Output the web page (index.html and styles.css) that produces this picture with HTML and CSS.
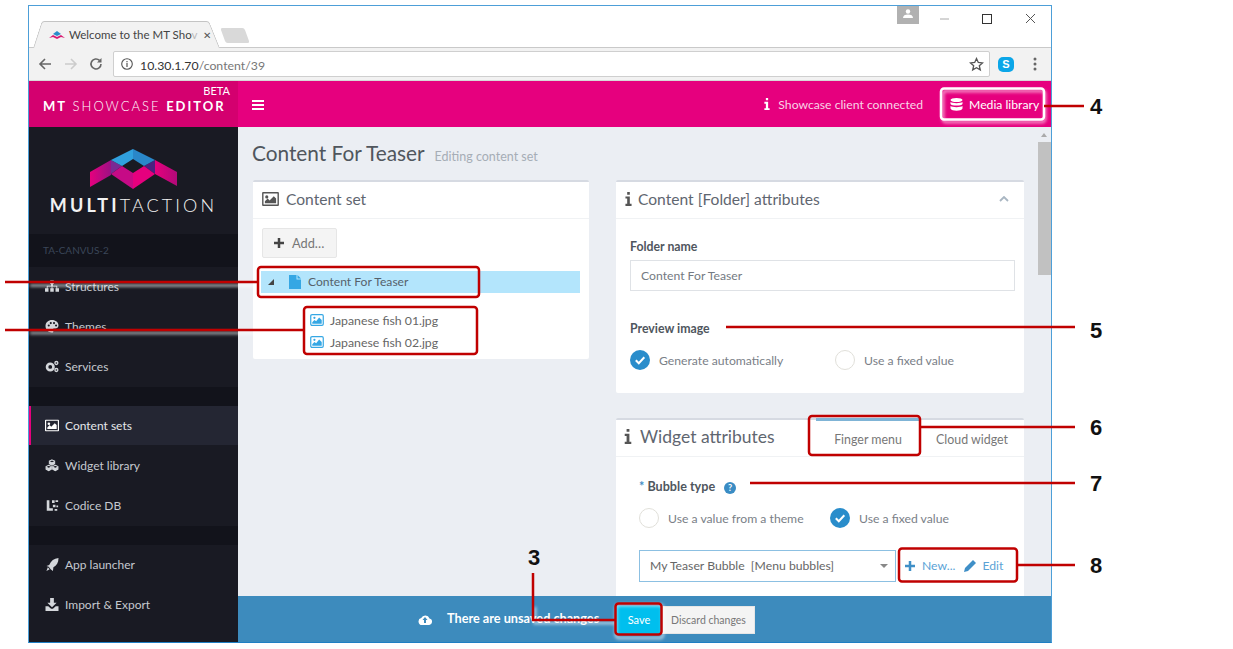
FILE: index.html
```html
<!DOCTYPE html>
<html lang="en">
<head>
<meta charset="utf-8">
<title>MT Showcase Editor</title>
<link rel="stylesheet" href="styles.css">
</head>
<body>
<svg width="0" height="0" class="defs">
  <symbol id="i-image" viewBox="0 0 18 15"><path fill="currentColor" fill-rule="evenodd" d="M1 0h16a1 1 0 0 1 1 1v13a1 1 0 0 1-1 1H1a1 1 0 0 1-1-1V1a1 1 0 0 1 1-1zm.5 1.500v12h15v-12zM3 12V10l3-3 2 2 4.500-4.500L15 7v5zM5 7a1.700 1.700 0 1 1 0-3.400A1.700 1.700 0 0 1 5 7z"/></symbol>
  <symbol id="i-info" viewBox="0 0 8 16"><path fill="currentColor" d="M2.500 0h3v3h-3zM.5 5h5v8.500h2V16H.5v-2.500h2V7.500h-2z"/></symbol>
  <symbol id="i-plus" viewBox="0 0 12 12"><path fill="currentColor" d="M4.500 0h3v4.500H12v3H7.500V12h-3V7.500H0v-3h4.500z"/></symbol>
  <symbol id="i-photo" viewBox="0 0 16 14"><rect x=".7" y=".7" width="14.600" height="12.600" rx="1.500" fill="#fff" stroke="#35a7e4" stroke-width="1.400"/><path fill="#35a7e4" d="M2.500 11.500V9.500L5 7l2 1.500L10.500 4 13.500 7v4.500z"/><circle cx="5" cy="4.500" r="1.300" fill="#35a7e4"/></symbol>
  <symbol id="i-check" viewBox="0 0 20 20"><circle cx="10" cy="10" r="10" fill="#2a8dcb"/><path d="M5.800 10.300l3 3 5.500-6" fill="none" stroke="#fff" stroke-width="2"/></symbol>
</svg>

<div class="window">
  <div class="tabstrip">
    <div class="tab">
      <svg class="favicon" width="16" height="8" viewBox="0 0 16 8"><path fill="#d81b72" d="M0 7l4-3 4 2 4-2 4 3-4-1-4 2-4-2z"/><path fill="#2a8dcb" d="M4 3l4-3 4 3-4 2z"/></svg>
      <span class="tab-title">Welcome to the MT Sho<span class="tab-fade">v</span></span>
      <span class="tab-close">✕</span>
    </div>
    <div class="newtab"></div>
    <div class="winctl">
      <div class="profile"><svg width="10" height="9" viewBox="0 0 10 9"><circle cx="5" cy="2.500" r="2.200" fill="#fff"/><path d="M0 9c0-2.500 2-3.500 5-3.500S10 6.500 10 9z" fill="#fff"/></svg></div>
      <svg class="ctl" width="96" height="20" viewBox="0 0 96 20"><path d="M0 10h9" stroke="#aaa" stroke-width="1"/><rect x="42.500" y="5.500" width="9" height="9" fill="none" stroke="#333"/><path d="M86 5l9 9M95 5l-9 9" stroke="#555" fill="none"/></svg>
    </div>
  </div>
  <div class="toolbar">
    <svg class="nav" width="16" height="14" viewBox="0 0 16 14"><path d="M14 7H3M8 2L3 7l5 5" fill="none" stroke="#666" stroke-width="1.600"/></svg>
    <svg class="nav" width="16" height="14" viewBox="0 0 16 14"><path d="M2 7h11M8 2l5 5-5 5" fill="none" stroke="#ccc" stroke-width="1.600"/></svg>
    <svg class="nav" width="14" height="14" viewBox="0 0 14 14"><path d="M12 7a5 5 0 1 1-1.500-3.600" fill="none" stroke="#666" stroke-width="1.600"/><path d="M12.500 1v4.500H8z" fill="#666"/></svg>
    <div class="omnibox">
      <svg width="12" height="12" viewBox="0 0 12 12"><circle cx="6" cy="6" r="5.300" fill="none" stroke="#555" stroke-width="1.100"/><path d="M6 5v4M6 3v1.200" stroke="#555" stroke-width="1.200"/></svg>
      <span class="url">10.30.1.70<span class="url-path">/content/39</span></span>
      <svg class="star" width="15" height="15" viewBox="0 0 15 15"><path d="M7.500 1.500l1.800 4 4.200.4-3.200 2.800 1 4.200-3.800-2.200-3.800 2.200 1-4.200L1.500 5.900l4.200-.4z" fill="none" stroke="#555" stroke-width="1.300"/></svg>
    </div>
    <div class="skype">S</div>
    <svg class="dots" width="4" height="14" viewBox="0 0 4 14"><circle cx="2" cy="2" r="1.500" fill="#666"/><circle cx="2" cy="7" r="1.500" fill="#666"/><circle cx="2" cy="12" r="1.500" fill="#666"/></svg>
  </div>

  <div class="app">
    <aside class="sidebar">
      <div class="brandbar">
        <span class="beta">BETA</span>
        <span class="brand"><b>MT</b> SHOWCASE <b>EDITOR</b></span>
      </div>
      <div class="logo">
        <svg width="90" height="42" viewBox="0 0 90 42">
          <defs>
            <linearGradient id="gl" x1="0" x2="1"><stop offset="0" stop-color="#e6007e"/><stop offset="1" stop-color="#9b1184"/></linearGradient>
            <linearGradient id="gr" x1="0" x2="1"><stop offset="0" stop-color="#e6007e"/><stop offset="1" stop-color="#b00a78"/></linearGradient>
          </defs>
          <path fill="url(#gl)" d="M1 25L22 13v15L1 40z"/>
          <path fill="url(#gr)" d="M66 13l22 12v14L66 27z"/>
          <path fill="#7a2a94" d="M22 13l11 6-11 8z"/>
          <path fill="#4b2180" d="M66 13l-11 6 11 8z"/>
          <path fill="#30a0de" d="M44 2v10L33 19 22 13z"/>
          <path fill="#2a87c9" d="M44 2v10l11 7 11-6z"/>
          <path fill="#c60a86" d="M33 19l11 7v16L22 27z"/>
          <path fill="#e6007e" d="M55 19l-11 7v16l22-15z"/>
        </svg>
        <span class="logotext"><b>MULTI</b>TACTION</span>
      </div>
      <div class="sb-band sb-device">TA-CANVUS-2</div>
      <nav class="sb-group">
        <a class="sb-item"><svg class="sb-ico" viewBox="0 0 16 14"><path fill="currentColor" d="M6 0h4v4H9v2h5v3h2v4h-4V9h1V7H8.500v2H10v4H6V9h1.500V7H3v2h1v4H0V9h2V6h5V4H6z"/></svg>Structures</a>
        <a class="sb-item"><svg class="sb-ico" viewBox="0 0 16 16"><path fill="currentColor" fill-rule="evenodd" d="M8 0c4.500 0 8 2.800 8 6.500 0 3-2.500 4.500-5 4-1.500-.2-2 .7-1.500 2 .6 1.500-.2 3-1.500 3C3.500 15.500 0 12 0 7.500 0 3 3.500 0 8 0zM4 5.500a1.300 1.300 0 1 0 0 2.600 1.300 1.300 0 0 0 0-2.600zM6.500 2.500a1.300 1.300 0 1 0 0 2.600 1.300 1.300 0 0 0 0-2.600zM10.500 2.500a1.300 1.300 0 1 0 0 2.600 1.300 1.300 0 0 0 0-2.600zM13 5.500a1.300 1.300 0 1 0 0 2.600 1.300 1.300 0 0 0 0-2.600z"/></svg>Themes</a>
        <a class="sb-item"><svg class="sb-ico" viewBox="0 0 16 14"><circle cx="6" cy="7.500" r="3.700" fill="none" stroke="currentColor" stroke-width="3"/><circle cx="13" cy="3" r="1.700" fill="none" stroke="currentColor" stroke-width="1.500"/><circle cx="13" cy="11" r="1.700" fill="none" stroke="currentColor" stroke-width="1.500"/></svg>Services</a>
      </nav>
      <div class="sb-band sb-gap"></div>
      <nav class="sb-group">
        <a class="sb-item sb-active"><svg class="sb-ico"><use href="#i-image"/></svg>Content sets</a>
        <a class="sb-item"><svg class="sb-ico" viewBox="0 0 17 15"><path fill="none" stroke="currentColor" stroke-width="1.300" d="M8.500 .7l3.200 1.400v3.300L8.500 7 5.300 5.400V2.100zM4.500 7.300l3.200 1.400v3.400l-3.200 1.700-3.200-1.700V8.700zM12.500 7.300l3.200 1.400v3.400l-3.200 1.700-3.200-1.700V8.700z"/><path fill="currentColor" d="M5.300 2.100l3.200 1.500 3.200-1.500v3.300L8.500 7 5.300 5.400zM1.300 8.700l3.200 1.500 3.200-1.500v3.400l-3.200 1.700-3.200-1.700zM9.300 8.700l3.200 1.500 3.200-1.500v3.400l-3.200 1.700-3.200-1.700z"/></svg>Widget library</a>
        <a class="sb-item"><svg class="sb-ico" viewBox="0 0 16 14"><path fill="currentColor" d="M2 1h3v9h4v3H2zM8 1h3v3H8zM12 1h3v2h-3zM9 6h3v3H9zM13 7h2v2h-2zM11 11h3v2h-3z"/></svg>Codice DB</a>
      </nav>
      <div class="sb-band sb-gap"></div>
      <nav class="sb-group">
        <a class="sb-item"><svg class="sb-ico" viewBox="0 0 14 14"><path fill="currentColor" d="M14 0c0 5-2 8-5.500 10l-.5 4-2.500-2L3.500 9.500 1 8.500l3-1C6 3 9 .5 14 0zM2.500 10l2 2L1 14z"/></svg>App launcher</a>
        <a class="sb-item"><svg class="sb-ico" viewBox="0 0 14 14"><path fill="currentColor" d="M5 0h4v5h3L7 10 2 5h3zM0 9h3l3 2.500h2L11 9h3v5H0z"/></svg>Import &amp; Export</a>
      </nav>
    </aside>

    <div class="workspace">
      <header class="appbar">
        <svg class="burger" width="12" height="10" viewBox="0 0 12 10"><path fill="#fff" d="M0 0h12v2H0zM0 4h12v2H0zM0 8h12v2H0z"/></svg>
        <span class="status"><svg width="6" height="12"><use href="#i-info"/></svg>Showcase client connected</span>
        <span class="medialib">
          <svg width="13" height="13" viewBox="0 0 13 13"><ellipse cx="6.500" cy="2" rx="6" ry="2" fill="#fff"/><path fill="#fff" d="M.5 4c1.500 1.500 10.500 1.500 12 0v2c-1 2-11 2-12 0zM.5 8c1.500 1.500 10.500 1.500 12 0v2.500c-1 3-11 3-12 0z"/></svg>
          Media library
        </span>
      </header>

      <div class="body">
        <main class="content">
          <h1 class="title">Content For Teaser <small>Editing content set</small></h1>
          <div class="columns">
            <section class="panel panel-tree">
              <div class="panel-head"><svg class="head-ico"><use href="#i-image"/></svg>Content set</div>
              <div class="panel-tree-body">
                <button class="btn-add"><svg width="10" height="10"><use href="#i-plus"/></svg>Add…</button>
                <div class="tree-root">
                  <span class="caret"></span>
                  <svg width="12" height="14" viewBox="0 0 12 14"><path fill="#35a7e4" d="M0 0h7.500v4.500H12V14H0zM8.500 0L12 3.500H8.500z"/></svg>
                  Content For Teaser
                </div>
                <div class="tree-file"><svg width="14" height="12"><use href="#i-photo"/></svg>Japanese fish 01.jpg</div>
                <div class="tree-file"><svg width="14" height="12"><use href="#i-photo"/></svg>Japanese fish 02.jpg</div>
              </div>
            </section>

            <div class="stack">
              <section class="panel panel-folder">
                <div class="panel-head">
                  <svg class="info-ico"><use href="#i-info"/></svg>Content [Folder] attributes
                  <svg class="chev" width="10" height="6" viewBox="0 0 10 6"><path d="M1 5l4-4 4 4" fill="none" stroke="#a9b6c2" stroke-width="1.800"/></svg>
                </div>
                <div class="form">
                  <label class="field-label">Folder name</label>
                  <div class="input">Content For Teaser</div>
                  <label class="field-label preview-label">Preview image</label>
                  <div class="radios radios-preview">
                    <span class="radio radio-auto"><svg width="20" height="20"><use href="#i-check"/></svg>Generate automatically</span>
                    <span class="radio"><i class="ring"></i>Use a fixed value</span>
                  </div>
                </div>
              </section>

              <section class="panel panel-widget">
                <div class="panel-head widget-head">
                  <svg class="info-big"><use href="#i-info"/></svg>
                  <span class="widget-title">Widget attributes</span>
                  <div class="tabs">
                    <span class="wtab wtab-on">Finger menu</span>
                    <span class="wtab">Cloud widget</span>
                  </div>
                </div>
                <div class="form form-widget">
                  <label class="field-label bubble-label"><span class="req">*</span> Bubble type <span class="help">?</span></label>
                  <div class="radios radios-bubble">
                    <span class="radio radio-theme"><i class="ring"></i>Use a value from a theme</span>
                    <span class="radio"><svg width="20" height="20"><use href="#i-check"/></svg>Use a fixed value</span>
                  </div>
                  <div class="select-row">
                    <div class="select">My Teaser Bubble&nbsp; [Menu bubbles]<span class="select-caret"></span></div>
                    <span class="link"><svg width="10" height="10"><use href="#i-plus"/></svg>New...</span>
                    <span class="link link-edit"><svg width="12" height="12" viewBox="0 0 12 12"><path d="M9 0l3 3-8 8-4 1 1-4z" fill="currentColor"/></svg>Edit</span>
                  </div>
                </div>
              </section>
            </div>
          </div>
        </main>
        <div class="scrollbar">
          <span class="sc-up"></span>
          <span class="sc-thumb"></span>
        </div>
      </div>

      <footer class="savebar">
        <svg width="14" height="11" viewBox="0 0 14 11"><path fill="#fff" fill-rule="evenodd" d="M4 11a3.500 3.500 0 0 1-.8-6.900A4.500 4.500 0 0 1 11.500 4.500 3.300 3.300 0 0 1 10.500 11zM7 3L4.500 6H6v3h2V6h1.500z"/></svg>
        <span class="unsaved">There are unsaved changes</span>
        <button class="btn-save">Save</button>
        <button class="btn-discard">Discard changes</button>
      </footer>
    </div>
  </div>
</div>

<!-- callouts drawn over the screenshot -->
<svg class="callouts" width="1233" height="649" viewBox="0 0 1233 649">
  <defs><filter id="soft" x="-20%" y="-200%" width="140%" height="500%"><feGaussianBlur stdDeviation="1.500"/></filter></defs>
  <g fill="none" stroke="#fff" stroke-opacity=".55" stroke-width="3" filter="url(#soft)">
    <path d="M30 285.500H259M30 333H305"/>
    <rect x="943" y="91" width="102" height="31" rx="3"/>
    <path d="M535 607v16h80"/>
    <rect x="616" y="605" width="47" height="33" rx="3"/>
  </g>
  <rect x="941" y="88.500" width="103" height="31" rx="3" fill="none" stroke="#fff" stroke-width="2.500"/>
  <g fill="none" stroke="#c00000" stroke-width="2.500">
    <path d="M1044 106h40M5 282h252M5 330h298M726 327h349M921 427h154M750 483h325M1017 565h58M533 573v47h82"/>
    <rect x="258" y="267" width="221" height="30" rx="3"/>
    <rect x="304" y="307" width="173" height="47" rx="3"/>
    <rect x="809" y="416" width="111" height="39" rx="3"/>
    <rect x="899" y="548.500" width="118" height="33" rx="3"/>
    <rect x="615.500" y="603.500" width="46" height="31" rx="3"/>
  </g>
</svg>
<span class="num num-4">4</span>
<span class="num num-5">5</span>
<span class="num num-6">6</span>
<span class="num num-7">7</span>
<span class="num num-8">8</span>
<span class="num num-3">3</span>
</body>
</html>
```
FILE: styles.css
```css
* { box-sizing: border-box; }
html, body { margin: 0; height: 649px; overflow: hidden; background: #fff; }
body { font-family: "Lato", "Open Sans", sans-serif; color: #5f6670; padding: 5px 0 0 28px; }
.defs { position: absolute; }

.window { width: 1024px; height: 638px; border: 1px solid #4d9fd8; border-bottom-color: #1f7fc4; display: flex; flex-direction: column; background: #fff; }

/* browser chrome */
.tabstrip { height: 42px; display: flex; align-items: flex-end; padding-left: 4px; border-bottom: 1px solid #c9c9c9; flex: none; }
.tab { position: relative; isolation: isolate; width: 187px; height: 27px; margin-bottom: -1px; display: flex; align-items: center; padding-left: 16px; font: 11.500px "Lato", sans-serif; color: #444; white-space: nowrap; }
.tab::before, .tab::after { content: ""; position: absolute; top: 0; bottom: 0; width: 60%; background: #f2f2f2; border-top: 1px solid #c4c4c4; z-index: -1; }
.tab::before { left: 0; border-left: 1px solid #c4c4c4; border-radius: 3px 0 0 0; transform-origin: bottom left; transform: skewX(-18deg); }
.tab::after { right: 0; border-right: 1px solid #c4c4c4; border-radius: 0 3px 0 0; transform-origin: bottom right; transform: skewX(22deg); }
.tab-title { margin-left: 4px; }
.tab-fade { color: #bbb; }
.tab-close { margin-left: 6px; font-size: 10px; color: #555; }
.newtab { width: 24px; height: 15px; margin: 0 0 4px 3px; background: #d9d9d9; border-radius: 2px; transform: skewX(20deg); }
.winctl { margin-left: auto; align-self: flex-start; display: flex; align-items: flex-start; }
.profile { width: 22px; height: 18px; background: #b1b1b1; display: flex; justify-content: center; padding-top: 3px; margin-right: 21px; }
.ctl { margin-top: 3px; margin-right: 15px; }

.toolbar { height: 33px; flex: none; background: #f2f2f2; display: flex; align-items: center; padding-left: 8px; border-bottom: 1px solid #d8d8d8; }
.nav { margin-right: 10px; flex: none; }
.omnibox { width: 877px; height: 26px; background: #fff; border: 1px solid #cfcfcf; border-radius: 2px; display: flex; align-items: center; padding: 0 5px 0 7px; font-size: 12.300px; color: #333; }
.url { margin-left: 7px; padding-top: 2px; }
.url-path { color: #777; }
.star { margin-left: auto; }
.skype { width: 16px; height: 15px; margin-left: 8px; border-radius: 5px; background: #0ca6e8; color: #fff; font: bold 11px/15px "Liberation Sans", sans-serif; text-align: center; }
.dots { margin-left: 19px; }

/* app shell */
.app { flex: 1; display: flex; min-height: 0; }
.sidebar { width: 209px; flex: none; background: #191a23; display: flex; flex-direction: column; }
.brandbar { height: 46px; background: #d4006f; position: relative; display: flex; align-items: flex-end; padding: 0 0 13px 14px; color: #fff; }
.beta { position: absolute; right: 8px; top: 3px; font-size: 11px; }
.brand { font-size: 13px; font-weight: 300; letter-spacing: 2px; white-space: nowrap; }
.brand b { font-weight: 700; }
.logo { height: 107px; display: flex; flex-direction: column; align-items: center; padding-top: 20px; }
.logotext { margin-top: 5px; color: #f2f2f2; font-size: 18px; font-weight: 300; letter-spacing: 3.100px; white-space: nowrap; }
.logotext b { font-weight: 700; }
.sb-band { background: #12131b; flex: none; }
.sb-device { height: 33px; padding: 10px 0 0 14px; font-size: 10px; color: #3a4658; }
.sb-gap { height: 19px; }
.sb-group { display: flex; flex-direction: column; flex: none; }
.sb-item { height: 40px; display: flex; align-items: center; gap: 6px; padding: 0 0 1px 16px; font-size: 12px; color: #c5c9cf; }
.sb-ico { width: 14px; height: 13px; flex: none; color: #d4d7db; }
.sb-active { height: 39px; margin-bottom: 1px; background: #242633; color: #e4e6ea; border-left: 2px solid #e6007e; padding: 0 0 0 14px; }
.sb-active .sb-ico { color: #fff; }

.workspace { flex: 1; min-width: 0; display: flex; flex-direction: column; }
.appbar { height: 46px; flex: none; background: #e6007e; display: flex; align-items: center; padding-left: 14px; color: #fff; font-size: 12.200px; }
.burger { margin-top: 1px; }
.status { margin-left: auto; display: flex; align-items: center; gap: 8px; color: #f9d4e7; }
.status svg { color: #fff; }
.medialib { margin-left: 18px; width: 103px; margin-right: 7px; display: flex; align-items: center; gap: 6px; padding-left: 9px; white-space: nowrap; }

.body { flex: 1; min-height: 0; display: flex; background: #ebeef3; overflow: hidden; }
.content { flex: 1; padding: 13px 12px 0 14px; min-width: 0; }
.title { margin: 0 0 14px; font-size: 20.800px; line-height: 26px; font-weight: 400; color: #50565d; white-space: nowrap; }
.title small { font-size: 12.500px; line-height: 1; color: #a6adb6; margin-left: 5px; }
.columns { display: grid; grid-template-columns: 336px 408px; column-gap: 27px; align-items: start; margin-left: 1px; }
.panel { background: #fff; border-top: 2px solid #d6dae2; border-radius: 2px; }
.stack { display: flex; flex-direction: column; gap: 25px; }
.panel-head { height: 37px; display: flex; align-items: center; padding: 0 0 3px 9px; font-size: 15.600px; color: #5f6670; border-bottom: 1px solid #f0f2f4; white-space: nowrap; }
.head-ico { width: 17px; height: 14px; margin-right: 7px; color: #555; }
.panel-tree { height: 179px; }
.panel-tree-body { padding: 9px 9px 0 8px; }
.btn-add { display: flex; align-items: center; gap: 8px; width: 75px; height: 30px; margin-left: 1px; padding: 0 0 0 11px; background: #f4f4f4; border: 1px solid #e6e6e6; border-radius: 2px; font: 12.800px "Lato", sans-serif; color: #777; }
.btn-add svg { color: #444; }
.tree-root { height: 22px; margin: 13px 0 16px; background: #b3e5fc; display: flex; align-items: center; padding: 0 0 1px 7px; font-size: 12.100px; color: #55616b; }
.caret { width: 0; height: 0; border-left: 6px solid transparent; border-bottom: 6px solid #444; margin-right: 15px; }
.tree-root svg { margin-right: 7px; }
.tree-file { height: 22px; display: flex; align-items: center; gap: 6px; margin-left: 49px; font-size: 12.300px; color: #666; white-space: nowrap; }

.info-ico { width: 7px; height: 14px; margin-right: 6px; color: #555; }
.chev { margin-left: auto; margin-right: 15px; }
.panel-folder { height: 213px; }
.form { padding: 20px 9px 0 14px; }
.field-label { display: block; font-size: 12.300px; font-weight: 700; color: #4f565e; line-height: 16px; }
.input { height: 31px; width: 385px; margin-top: 5px; border: 1px solid #dfe2e6; display: flex; align-items: center; padding-left: 10px; font-size: 12.200px; color: #747a82; }
.preview-label { margin-top: 30px; }
.radios { display: flex; align-items: center; font-size: 12.200px; color: #7a8087; }
.radios-preview { margin-top: 13px; }
.radio { display: flex; align-items: center; gap: 9px; white-space: nowrap; }
.radio-auto { width: 205px; }
.ring { width: 20px; height: 20px; border-radius: 50%; border: 1px solid #e1e0da; flex: none; }

.panel-widget { height: 200px; }
.widget-head { height: 37px; padding-left: 8px; position: relative; }
.info-big { width: 8px; height: 15px; margin-right: 8px; color: #555; }
.widget-title { font-size: 17.500px; }
.tabs { margin-left: auto; display: flex; align-self: stretch; margin: -2px 0 -3px auto; font-size: 12.400px; }
.wtab { width: 104px; display: flex; align-items: center; justify-content: center; padding-top: 2px; color: #777; white-space: nowrap; border-top: 3px solid transparent; }
.wtab-on { border-top-color: #7fb4d6; }
.form-widget { padding: 22px 9px 0 23px; }
.req { color: #3f8fc7; }
.bubble-label { font-size: 12.600px; }
.help { display: inline-block; width: 12px; height: 12px; margin-left: 6px; border-radius: 50%; background: #3a8cc4; color: #fff; font-size: 9px; line-height: 12px; text-align: center; vertical-align: 0; }
.radios-bubble { margin-top: 13px; }
.radio-theme { width: 191px; }
.select-row { display: flex; align-items: center; margin-top: 22px; font-size: 12.200px; }
.select { width: 257px; height: 32px; border: 1px solid #8cc0e2; display: flex; align-items: center; padding: 0 0 2px 10px; color: #666; white-space: nowrap; flex: none; position: relative; }
.select-caret { position: absolute; right: 7px; top: 13px; border: 4px solid transparent; border-top: 4px solid #888; border-bottom: 0; }
.link { color: #5ba3d6; display: flex; align-items: center; gap: 7px; margin-left: 9px; padding-bottom: 2px; white-space: nowrap; }
.link svg { color: #3f8fc7; margin-top: 2px; }
.link-edit { gap: 6px; margin-left: 9px; }

.scrollbar { width: 13px; flex: none; display: flex; flex-direction: column; align-items: stretch; }
.sc-up { height: 15px; position: relative; flex: none; }
.sc-up::after { content: ""; position: absolute; left: 3px; top: 6px; border: 3.500px solid transparent; border-bottom: 4px solid #aaa; border-top: 0; }
.sc-thumb { height: 133px; background: #c1c1c1; }

.savebar { height: 46px; flex: none; background: #3d8bbd; display: flex; align-items: center; padding-left: 180px; font-size: 12.700px; color: #fff; }
.unsaved { margin-left: 15px; padding-bottom: 3px; font-weight: 700; white-space: nowrap; width: 169px; }
.btn-save { width: 46px; height: 28px; margin-top: 1px; border: 0; background: #00bfee; color: #fff; font: 11px "Lato", sans-serif; padding: 0; }
.btn-discard { width: 93px; height: 28px; margin-top: 1px; border: 1px solid #e6e6e6; background: #f4f4f4; color: #777; font: 10.500px "Lato", sans-serif; padding: 0; }

/* callouts */
.callouts { position: absolute; left: 0; top: 0; pointer-events: none; }
.num { position: absolute; font: 700 22px/24px "Liberation Sans", sans-serif; color: #111; }
.num-4 { left: 1090px; top: 95px; }
.num-5 { left: 1090px; top: 319px; }
.num-6 { left: 1090px; top: 416px; }
.num-7 { left: 1090px; top: 472px; }
.num-8 { left: 1090px; top: 554px; }
.num-3 { left: 528px; top: 546px; }
```
